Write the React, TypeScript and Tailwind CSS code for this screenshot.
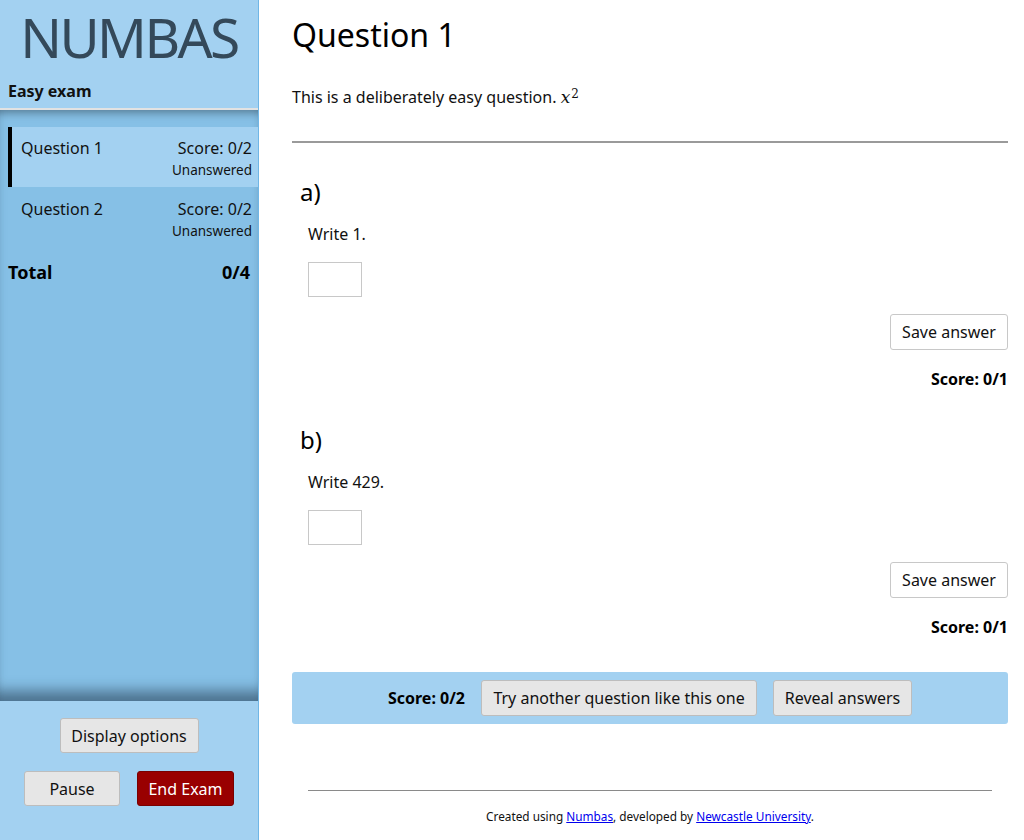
import React from "react";

function SideRow({ label, selected }: { label: string; selected?: boolean }) {
  return (
    <div
      className={
        "ml-2 h-[60px] flex justify-between pr-[6px] " +
        (selected ? "bg-[#a3d1f1] border-l-4 border-black pl-[9px]" : "pl-[13px]")
      }
    >
      <div className="text-[16px] leading-[24px] pt-[9px] text-[#111]">{label}</div>
      <div className="flex flex-col items-end pt-[9px]">
        <div className="text-[16px] leading-[24px] text-[#111]">Score: 0/2</div>
        <div className="text-[13.5px] leading-[20px] text-[#111]">Unanswered</div>
      </div>
    </div>
  );
}

function Part({ letter, prompt }: { letter: string; prompt: string }) {
  return (
    <div>
      <div className="pl-2 text-[24px] leading-[32px] text-black">{letter}</div>
      <div className="pl-4 mt-[14px] text-[16px] leading-[24px] text-[#111]">{prompt}</div>
      <div className="pl-4 mt-[16px]">
        <div className="w-[54px] h-[35px] border border-[#c8c8c8] bg-white" />
      </div>
      <div className="mt-[17px] flex justify-end">
        <button className="h-[36px] w-[118px] bg-white border border-[#c8c8c8] rounded-[3px] text-[16px] text-[#111]">
          Save answer
        </button>
      </div>
      <div className="mt-[17px] text-right text-[16px] leading-[24px] font-bold text-black">Score: 0/1</div>
    </div>
  );
}

export default function App() {
  return (
    <div
      className="flex w-[1024px] h-[840px] bg-white overflow-hidden"
      style={{ fontFamily: '"Noto Sans", "Open Sans", sans-serif' }}
    >
      <aside className="w-[259px] shrink-0 h-full flex flex-col bg-[#a3d1f1] border-r-[1.5px] border-[#70b6e6]">
        <div className="h-[108px] shrink-0">
          <div className="pt-[4px] text-center text-[55px] leading-[66px] tracking-[-2.6px] text-[#34495a]">NUMBAS</div>
          <div className="pl-2 mt-[9px] text-[16px] leading-[24px] font-bold text-[#111]">Easy exam</div>
        </div>
        <div className="h-[2px] shrink-0 bg-[#e2e2e2]" />
        <div className="flex-1 bg-[#86c0e6] shadow-[inset_0_9px_8px_-6px_rgba(0,0,0,0.35),inset_0_-18px_14px_-8px_rgba(30,50,70,0.55)] pt-[17px]">
          <SideRow label="Question 1" selected />
          <div className="h-px" />
          <SideRow label="Question 2" />
          <div className="flex justify-between pl-2 pr-2 mt-[12px] text-[18px] leading-[24px] font-bold text-black">
            <span>Total</span>
            <span>0/4</span>
          </div>
        </div>
        <div className="h-[139px] shrink-0 flex flex-col items-center pt-[17px]">
          <button className="h-[35px] w-[139px] bg-[#e6e6e6] border border-[#bdbdbd] rounded-[3px] text-[16px] text-[#111]">
            Display options
          </button>
          <div className="mt-[18px] flex gap-[17px]">
            <button className="h-[35px] w-[96px] bg-[#e6e6e6] border border-[#bdbdbd] rounded-[3px] text-[16px] text-[#111]">
              Pause
            </button>
            <button className="h-[35px] w-[97px] bg-[#990000] border border-[#7a0000] rounded-[3px] text-[16px] text-white">
              End Exam
            </button>
          </div>
        </div>
      </aside>

      <main className="flex-1 pl-[33px] pr-[16px]">
        <h1 className="pt-[15px] text-[32px] leading-[40px] text-black">Question 1</h1>
        <p className="mt-[30px] text-[16px] leading-[24px] text-[#111]">
          This is a deliberately easy question.{" "}
          <span style={{ fontFamily: '"DejaVu Serif", "Liberation Serif", serif' }} className="italic text-[17px]">
            x
          </span>
          <sup style={{ fontFamily: '"DejaVu Serif", "Liberation Serif", serif' }} className="text-[12px] relative -top-[5px] ml-px">
            2
          </sup>
        </p>
        <div className="mt-[32px] h-[2px] bg-[#9a9a9a]" />
        <div className="mt-[33px]">
          <Part letter="a)" prompt="Write 1." />
        </div>
        <div className="mt-[33px]">
          <Part letter="b)" prompt="Write 429." />
        </div>
        <div className="mt-[33px] h-[52px] bg-[#a3d1f1] rounded-[3px] flex items-center justify-center gap-[16px]">
          <span className="text-[16px] font-bold text-black">Score: 0/2</span>
          <button className="h-[36px] w-[276px] bg-[#e6e6e6] border border-[#bdbdbd] rounded-[3px] text-[16px] text-[#111]">
            Try another question like this one
          </button>
          <button className="h-[36px] w-[139px] bg-[#e6e6e6] border border-[#bdbdbd] rounded-[3px] text-[16px] text-[#111]">
            Reveal answers
          </button>
        </div>
        <div className="mx-4 mt-[66px] h-px bg-[#8a8a8a]" />
        <div className="mt-[15px] text-center text-[11.8px] leading-[20px] text-[#111]">
          Created using{" "}
          <a href="#" className="text-[#0000ee] underline">
            Numbas
          </a>
          , developed by{" "}
          <a href="#" className="text-[#0000ee] underline">
            Newcastle University
          </a>
          .
        </div>
      </main>
    </div>
  );
}
